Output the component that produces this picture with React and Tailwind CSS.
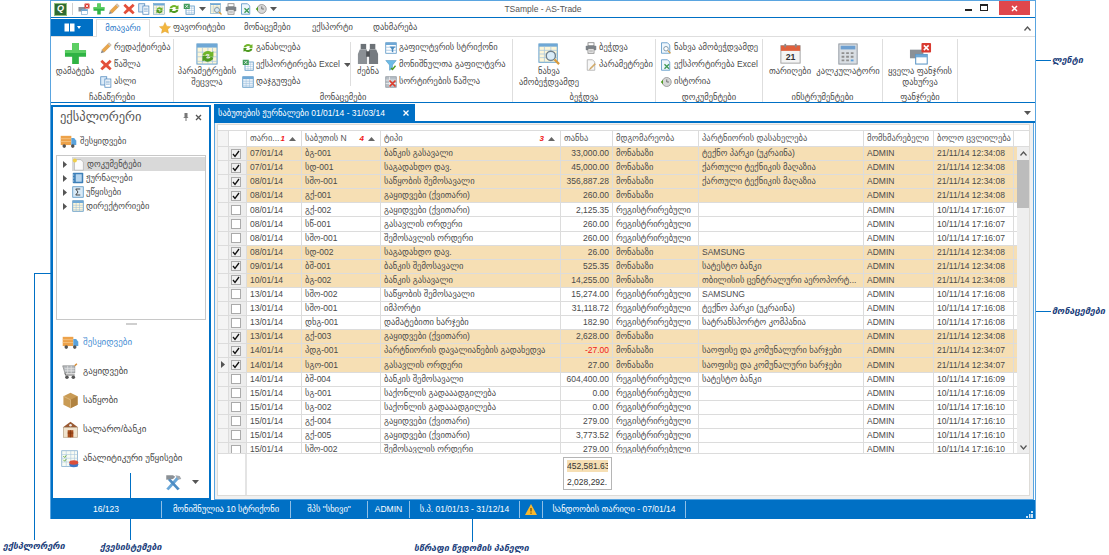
import React from "react";

const Ic = ({ s = 12, v = 16, className = "", children }) => (
  <svg width={s} height={s} viewBox={`0 0 ${v} ${v}`} className={`shrink-0 ${className}`}>
    {children}
  </svg>
);

const PlusIcon = ({ s = 13 }) => (
  <Ic s={s} v={24}>
    <path d="M8.5 1h7v7.5H23v7h-7.500V23h-7v-7.500H1v-7h7.500z" fill="#2fb344" />
    <path d="M8.500 1h7v7.500H23v3H1v-3h7.500z" fill="#5ccf63" />
  </Ic>
);
const PencilIcon = ({ s = 12 }) => (
  <Ic s={s}>
    <path d="M12 1l3 3-9.500 9.500-3-3z" fill="#e9a64a" stroke="#b9782c" strokeWidth=".5" />
    <path d="M2.500 10.500l3 3L1 15z" fill="#8a8a8a" />
    <path d="M12 1l3 3-1.500 1.500-3-3z" fill="#c9c9c9" />
  </Ic>
);
const XIcon = ({ s = 12 }) => (
  <Ic s={s}>
    <path d="M3 1l5 4.500L13 1l2.500 2.500L11 8l4.500 4.500L13 15l-5-4.500L3 15 .5 12.500 5 8 .5 3.500z" fill="#e34f3a" />
  </Ic>
);
const CopyIcon = ({ s = 12 }) => (
  <Ic s={s}>
    <rect x="1" y="1" width="8" height="11" fill="#dcebf8" stroke="#4c86bd" />
    <rect x="6.500" y="4" width="8" height="11" fill="#fff" stroke="#4c86bd" />
    <path d="M8 7h5M8 9h5M8 11h5" stroke="#7fa9d1" />
  </Ic>
);
const RefreshIcon = ({ s = 12 }) => (
  <Ic s={s}>
    <path d="M2 7a6 5 0 0 1 10-3l2-1v5H9l2-1.500A3.500 3 0 0 0 5 7z" fill="#72b52b" />
    <path d="M14 9a6 5 0 0 1-10 3l-2 1V8h5L5 9.500A3.500 3 0 0 0 11 9z" fill="#4e9a20" />
  </Ic>
);
const TableIcon = ({ s = 12, fill = "#fdf6d8" }) => (
  <Ic s={s}>
    <rect x="1" y="1" width="14" height="14" fill={fill} stroke="#4c8cc0" />
    <rect x="1" y="1" width="14" height="3" fill="#6fa8d6" />
    <path d="M1 7h14M1 10h14M1 13h14M5.500 4v11M10 4v11" stroke="#9bbedd" strokeWidth=".7" />
  </Ic>
);
const GridRefreshIcon = ({ s = 24 }) => (
  <Ic s={s} v={24}>
    <rect x="1" y="1" width="22" height="22" fill="#fdf6d8" stroke="#5a98c8" />
    <rect x="1" y="1" width="22" height="4" fill="#6fa8d6" />
    <path d="M1 10h22M1 15h22M1 20h22M7 5v18M13 5v18M18 5v18" stroke="#a5c5e0" strokeWidth=".8" />
    <path d="M7 13a6 5 0 0 1 10-3l2-1v6h-6l2-2a3 3 0 0 0-5 1z" fill="#6fb52a" />
    <path d="M19 16a6 5 0 0 1-10 3l-2 1v-6h6l-2 2a3 3 0 0 0 5-1z" fill="#4e9a20" />
  </Ic>
);
const ExportIcon = ({ s = 12 }) => (
  <Ic s={s}>
    <rect x="4" y="4" width="11" height="11" fill="#fff" stroke="#4c8cc0" />
    <path d="M4 7h11M4 10h11M4 13h11M8 4v11M11.500 4v11" stroke="#9bbedd" strokeWidth=".7" />
    <rect x="1" y="1" width="8" height="7" fill="#3f9a58" />
    <path d="M3 2.500l4 4M7 2.500l-4 4" stroke="#fff" />
  </Ic>
);
const SearchTableIcon = ({ s = 24 }) => (
  <Ic s={s} v={24}>
    <rect x="1" y="1" width="20" height="20" fill="#fdf6d8" stroke="#5a98c8" />
    <rect x="1" y="1" width="20" height="3" fill="#6fa8d6" />
    <path d="M1 8h20M1 12h20M1 16h20M7 4v17M14 4v17" stroke="#a5c5e0" strokeWidth=".8" />
    <circle cx="14" cy="14" r="5" fill="#d9ecf8" stroke="#6e7f8c" strokeWidth="1.500" />
    <path d="M18 18l5 5" stroke="#d89a3c" strokeWidth="2.500" />
  </Ic>
);
const PrinterIcon = ({ s = 12 }) => (
  <Ic s={s}>
    <rect x="4" y="1" width="8" height="4" fill="#fff" stroke="#777" />
    <rect x="1" y="5" width="14" height="6" rx="1" fill="#7c8288" />
    <rect x="4" y="9" width="8" height="6" fill="#fff" stroke="#777" />
    <path d="M5.500 11h5M5.500 13h5" stroke="#999" />
  </Ic>
);
const DocGearIcon = ({ s = 12 }) => (
  <Ic s={s}>
    <path d="M3 1h7l3 3v11H3z" fill="#f7f7f7" stroke="#a8a8a8" />
    <path d="M14 7l-6 6-2 1 1-2 6-6z" fill="#e1b264" stroke="#a97f3a" strokeWidth=".5" />
  </Ic>
);
const DocSearchIcon = ({ s = 12 }) => (
  <Ic s={s}>
    <path d="M2 1h8l3 3v11H2z" fill="#eef6fc" stroke="#4c8cc0" />
    <circle cx="8" cy="9" r="3" fill="#fff" stroke="#5f7c93" />
    <path d="M10.500 11.500L14 15" stroke="#d89a3c" strokeWidth="1.500" />
  </Ic>
);
const DocExcelIcon = ({ s = 12 }) => (
  <Ic s={s}>
    <path d="M2 1h8l3 3v11H2z" fill="#eef6fc" stroke="#4c8cc0" />
    <path d="M6 7l6 6M12 7l-6 6" stroke="#3f9a58" strokeWidth="1.800" />
  </Ic>
);
const HistoryIcon = ({ s = 12 }) => (
  <Ic s={s}>
    <circle cx="9" cy="8" r="6" fill="#d7d7d7" stroke="#8b8b8b" />
    <path d="M9 4.500V8h3" stroke="#555" fill="none" />
    <path d="M1 8l3-3v6z" fill="#4e9a20" />
  </Ic>
);
const FilterRowIcon = ({ s = 12 }) => (
  <Ic s={s}>
    <rect x="1" y="1" width="14" height="14" fill="#fff" stroke="#4c8cc0" />
    <rect x="1" y="1" width="14" height="3" fill="#6fa8d6" />
    <path d="M1 7h14M1 11h14" stroke="#9bbedd" />
    <path d="M6 6h8l-3 3.500V14l-2-1V9.500z" fill="#4c8cc0" />
  </Ic>
);
const FunnelIcon = ({ s = 12 }) => (
  <Ic s={s}>
    <path d="M1 2h14L10 8v5l-4 2V8z" fill="#6cbbe6" stroke="#3a87b8" strokeWidth=".6" />
    <path d="M8 12l2 2 4-5" stroke="#4e9a20" strokeWidth="1.800" fill="none" />
  </Ic>
);
const SortXIcon = ({ s = 12 }) => (
  <Ic s={s}>
    <rect x="1" y="1" width="14" height="14" fill="#b9c0c7" stroke="#8a9299" />
    <path d="M1 5.500h14M1 10h14M6 1v14" stroke="#f2f2f2" />
    <path d="M6 6l8 8M14 6l-8 8" stroke="#df3b2a" strokeWidth="2.200" />
  </Ic>
);
const BinocularsIcon = ({ s = 22 }) => (
  <Ic s={s} v={24}>
    <rect x="4" y="1" width="6" height="6" fill="#6c7277" />
    <rect x="14" y="1" width="6" height="6" fill="#6c7277" />
    <path d="M3 7h8v16H1V12z" fill="#8b9095" />
    <path d="M13 7h8l2 5v11H13z" fill="#757a80" />
    <rect x="10" y="9" width="4" height="6" fill="#4f5357" />
  </Ic>
);
const CalendarIcon = ({ s = 21 }) => (
  <Ic s={s} v={24}>
    <rect x="1" y="3" width="22" height="20" fill="#f4f4f4" stroke="#9a9a9a" />
    <rect x="1" y="3" width="22" height="6" fill="#e0603c" />
    <rect x="5" y="1" width="2" height="4" fill="#888" />
    <rect x="17" y="1" width="2" height="4" fill="#888" />
    <text x="12" y="19.500" textAnchor="middle" fontSize="10" fontWeight="700" fontFamily="Liberation Sans" fill="#333">21</text>
  </Ic>
);
const CalculatorIcon = ({ s = 22 }) => (
  <Ic s={s} v={24}>
    <rect x="2" y="1" width="20" height="22" fill="#d9dee3" stroke="#8d959c" />
    <rect x="4" y="3" width="16" height="4" fill="#6e9fd0" />
    <path d="M5 10h3v2H5zM10 10h3v2h-3zM15 10h3v2h-3zM5 14h3v2H5zM10 14h3v2h-3zM15 14h3v2h-3zM5 18h3v2H5zM10 18h3v2h-3z" fill="#8f8f8f" />
    <path d="M15 18h3v2h-3z" fill="#5aa0dc" />
  </Ic>
);
const CloseAllIcon = ({ s = 23 }) => (
  <Ic s={s} v={24}>
    <rect x="1" y="8" width="14" height="9" fill="#8a9097" />
    <rect x="7" y="13" width="12" height="10" fill="#fff" stroke="#4c8cc0" />
    <rect x="7" y="13" width="12" height="3" fill="#6fa8d6" />
    <rect x="13" y="1" width="10" height="10" rx="1" fill="#d93a30" />
    <path d="M15.500 3.500l5 5M20.500 3.500l-5 5" stroke="#fff" strokeWidth="1.600" />
  </Ic>
);
const TruckIcon = ({ s = 17 }) => (
  <Ic s={s} v={24}>
    <rect x="1" y="4" width="15" height="13" fill="#eda24a" />
    <path d="M1 8h15M1 12h15" stroke="#f6c98d" />
    <path d="M16 7h4l3 4v6h-7z" fill="#5aa3dc" />
    <circle cx="6" cy="18.500" r="2.500" fill="#555" />
    <circle cx="18" cy="18.500" r="2.500" fill="#555" />
  </Ic>
);
const CartIcon = ({ s = 17 }) => (
  <Ic s={s} v={24}>
    <path d="M1 4h17v10H4z" fill="#b8bcc0" stroke="#888" />
    <path d="M4 8h14M4 11h14M8 4v10M13 4v10" stroke="#e6e6e6" />
    <path d="M18 4l3-3" stroke="#d98b2e" strokeWidth="2" />
    <path d="M4 14l1 3h13" stroke="#666" strokeWidth="1.500" fill="none" />
    <circle cx="7" cy="20" r="2.500" fill="#555" />
    <circle cx="16" cy="20" r="2.500" fill="#555" />
  </Ic>
);
const BoxIcon = ({ s = 17 }) => (
  <Ic s={s} v={24}>
    <path d="M12 1l10 5v12l-10 5-10-5V6z" fill="#c99b55" />
    <path d="M12 11l10-5v12l-10 5z" fill="#b18340" />
    <path d="M2 6l10 5v12" stroke="#e2c08c" fill="none" />
  </Ic>
);
const BankIcon = ({ s = 17 }) => (
  <Ic s={s} v={24}>
    <path d="M12 1l11 8H1z" fill="#9a5b34" />
    <rect x="2" y="9" width="20" height="14" fill="#f0e3cd" stroke="#b7a387" />
    <rect x="8" y="13" width="8" height="10" fill="#a94f1e" />
    <path d="M12 13v10M8 17h8" stroke="#7a3510" />
    <circle cx="12" cy="6" r="1.800" fill="#eee" />
  </Ic>
);
const AnalyticsIcon = ({ s = 18 }) => (
  <Ic s={s} v={24}>
    <rect x="1" y="1" width="21" height="21" fill="#f7fbf3" stroke="#7ea9cd" />
    <path d="M1 6h21M1 11h21M1 16h21M7 1v21M13 1v21M18 1v21" stroke="#a9c7df" strokeWidth=".8" />
    <path d="M3 8l2 2 2-3M3 13l2 2 2-3" stroke="#4e9a20" fill="none" />
    <ellipse cx="17" cy="19" rx="6" ry="4" fill="#3f78c7" />
    <ellipse cx="17" cy="16.500" rx="6" ry="3" fill="#db4e3a" />
  </Ic>
);
const ToolsIcon = () => (
  <Ic s={18} v={24}>
    <path d="M3 21L17 5l3 3L6 23z" fill="#6aa7d8" />
    <path d="M21 21L8 7l-3 2 13 14z" fill="#4d8cc3" />
    <path d="M3 3h9l3 2-3 3-9 1z" fill="#8b9095" />
    <path d="M15 3l6 1 2 4-4 1z" fill="#a3a8ad" />
  </Ic>
);
const StarIcon = () => (
  <Ic s={12}>
    <path d="M8 .500l2.300 5 5.200.700-3.800 3.600 1 5.200L8 12.500 3.300 15l1-5.200L.500 6.200l5.200-.700z" fill="#f3b63e" stroke="#d99a22" strokeWidth=".5" />
  </Ic>
);
const NewDocIcon = () => (
  <Ic s={13}>
    <path d="M3 2h8l3 3v10H3z" fill="#fbfbfb" stroke="#b6b6b6" />
    <circle cx="3.500" cy="3" r="2.500" fill="#f0cf4a" />
  </Ic>
);
const JournalIcon = () => (
  <Ic s={12}>
    <rect x="1" y="1" width="14" height="14" rx="1" fill="#3d7fb8" />
    <rect x="5" y="3" width="8" height="10" fill="#b6d5ee" />
    <path d="M1 4h2M1 8h2M1 12h2" stroke="#dcebf8" />
  </Ic>
);
const SigmaIcon = () => (
  <Ic s={12}>
    <rect x="1" y="1" width="14" height="14" fill="#d8e9f6" stroke="#4c8cc0" />
    <path d="M5 4h6M5 4l3 4-3 4h6" stroke="#333" strokeWidth="1.200" fill="none" />
  </Ic>
);

const Caret = ({ className = "" }) => (
  <svg width="7" height="4" viewBox="0 0 7 4" className={`shrink-0 ${className}`}>
    <path d="M0 0h7L3.500 4z" fill="#555" />
  </svg>
);
const TreeArrow = ({ className = "" }) => (
  <svg width="4" height="7" viewBox="0 0 4 7" className={`shrink-0 ${className}`}>
    <path d="M0 0l4 3.500L0 7z" fill="#555" />
  </svg>
);

const BigButton = ({ icon, lines, className }) => (
  <div className={`flex flex-col items-center shrink-0 ${className}`}>
    <div className="h-[23px] flex items-center">{icon}</div>
    <div className="mt-[1px] text-center leading-[11px] whitespace-nowrap">
      {lines.map((l) => (
        <div key={l}>{l}</div>
      ))}
    </div>
  </div>
);

const SmallColumn = ({ items, className }) => (
  <div className={`flex flex-col shrink-0 -mt-[3px] ${className}`}>
    {items.map((it) => (
      <div key={it.label} className="h-[17px] flex items-center gap-[2px] whitespace-nowrap">
        {it.icon}
        <span>{it.label}</span>
        {it.caret && <Caret className="ml-[2px]" />}
      </div>
    ))}
  </div>
);

const RibbonGroup = ({ width, label, children }) => (
  <div className={`${width} shrink-0 flex flex-col pt-[3px] border-r border-[#dedede] h-[63px] mt-[2px]`}>
    <div className="h-[48px] flex">{children}</div>
    <div className="flex-1 flex items-end justify-center leading-[10px] whitespace-nowrap">{label}</div>
  </div>
);

const cols = {
  ind: "w-[11px]",
  chk: "w-[18px]",
  date: "w-[55px]",
  num: "w-[79px]",
  type: "w-[180px]",
  sum: "w-[52px]",
  status: "w-[86px]",
  partner: "w-[165px]",
  user: "w-[70px]",
  time: "w-[80px]",
};

const S1 = "მონახაზი";
const S2 = "რეგისტრირებული";
const P = "საოფისე და კომუნალური ხარჯები";

const rows = [
  [1, "07/01/14", "ბგ-001", "ბანკის გასავალი", "33,000.00", "ტექნო პარკი (უკრაინა)", "21/11/14 12:34:08"],
  [1, "07/01/14", "სდ-001", "საგადახდო დავ.", "45,000.00", "ქართული ტექნიკის მაღაზია", "21/11/14 12:34:08"],
  [1, "08/01/14", "სშო-001", "საწყობის შემოსავალი", "356,887.28", "ქართული ტექნიკის მაღაზია", "21/11/14 12:34:08"],
  [1, "08/01/14", "გქ-001", "გაყიდვები (ქვითარი)", "260.00", "", "21/11/14 12:34:08"],
  [0, "08/01/14", "გქ-002", "გაყიდვები (ქვითარი)", "2,125.35", "", "10/11/14 17:16:07"],
  [0, "08/01/14", "სწ-001", "გასავლის ორდერი", "260.00", "", "10/11/14 17:16:07"],
  [0, "08/01/14", "სშო-001", "შემოსავლის ორდერი", "260.00", "", "10/11/14 17:16:07"],
  [1, "08/01/14", "სდ-002", "საგადახდო დავ.", "26.00", "SAMSUNG", "21/11/14 12:34:08"],
  [1, "09/01/14", "ბშ-001", "ბანკის შემოსავალი", "525.35", "სატესტო ბანკი", "21/11/14 12:34:08"],
  [1, "10/01/14", "ბგ-002", "ბანკის გასავალი", "14,255.00", "თბილისის ცენტრალური აეროპორტ...", "21/11/14 12:34:08"],
  [0, "13/01/14", "სშო-002", "საწყობის შემოსავალი", "15,274.00", "SAMSUNG", "10/11/14 17:16:08"],
  [0, "13/01/14", "სშო-001", "იმპორტი", "31,118.72", "ტექნო პარკი (უკრაინა)", "10/11/14 17:16:08"],
  [0, "13/01/14", "დხგ-001", "დამატებითი ხარჯები", "182.90", "სატრანსპორტო კომპანია", "10/11/14 17:16:08"],
  [1, "13/01/14", "გქ-003", "გაყიდვები (ქვითარი)", "2,628.00", "", "21/11/14 12:34:08"],
  [1, "14/01/14", "პდგ-001", "პარტნიორის დავალიანების გადახედვა", "-27.00", P, "21/11/14 12:34:07"],
  [1, "14/01/14", "სგო-001", "გასავლის ორდერი", "27.00", P, "21/11/14 12:34:07", true],
  [0, "14/01/14", "ბშ-004", "ბანკის შემოსავალი", "604,400.00", "სატესტო ბანკი", "10/11/14 17:16:09"],
  [0, "15/01/14", "სგ-001", "საქონლის გადააადგილება", "0.00", "", "10/11/14 17:16:09"],
  [0, "15/01/14", "სგ-002", "საქონლის გადააადგილება", "0.00", "", "10/11/14 17:16:10"],
  [0, "15/01/14", "გქ-004", "გაყიდვები (ქვითარი)", "279.00", "", "10/11/14 17:16:10"],
  [0, "15/01/14", "გქ-005", "გაყიდვები (ქვითარი)", "3,773.52", "", "10/11/14 17:16:10"],
  [0, "15/01/14", "სშო-002", "შემოსავლის ორდერი", "279.00", "", "10/11/14 17:16:10"],
];

const HeaderCell = ({ width, label, order }) => (
  <div className={`${width} shrink-0 h-full flex items-center px-[3px] border-r border-[#dcdcdc]`}>
    <span className="whitespace-nowrap">{label}</span>
    {order && (
      <span className="ml-auto flex items-center gap-[4px] pr-[2px]">
        <span className="text-[#f01818] italic font-bold text-[8px]">{order}</span>
        <svg width="7" height="4" viewBox="0 0 7 4">
          <path d="M3.500 0L7 4H0z" fill="#666" />
        </svg>
      </span>
    )}
  </div>
);

const Cell = ({ width, right, red, children }) => (
  <div
    className={`${width} shrink-0 h-full flex items-center px-[3px] border-r border-[#dcdcdc] whitespace-nowrap overflow-hidden ${
      right ? "justify-end" : ""
    } ${red ? "text-[#f01818]" : ""}`}
  >
    {children}
  </div>
);

const Row = ({ row }) => {
  const [on, date, num, type, sum, partner, time, current] = row;
  return (
    <div className="h-[14.1px] flex border-b border-[#dcdcdc]">
      <div className={`${cols.ind} shrink-0 bg-[#f4f4f4] flex items-center justify-center border-r border-[#dcdcdc]`}>
        {current && <TreeArrow />}
      </div>
      <div className={`${cols.chk} shrink-0 bg-[#ededed] flex items-center pl-[2px] border-r border-[#dcdcdc]`}>
        <div className={`w-[10px] h-[10px] border border-[#aaa] flex items-center justify-center ${on ? "bg-[#f0f0f0]" : "bg-white"}`}>
          {on ? (
            <svg width="8" height="8" viewBox="0 0 8 8">
              <path d="M1 4l2 2.500L7 1" stroke="#111" strokeWidth="1.300" fill="none" />
            </svg>
          ) : null}
        </div>
      </div>
      <div className={`flex flex-1 ${on ? "bg-[#f6dfb4]" : "bg-white"}`}>
        <Cell width={cols.date}>{date}</Cell>
        <Cell width={cols.num}>{num}</Cell>
        <Cell width={cols.type}>{type}</Cell>
        <Cell width={cols.sum} right red={sum.startsWith("-")}>
          {sum}
        </Cell>
        <Cell width={cols.status}>{on ? S1 : S2}</Cell>
        <Cell width={cols.partner}>{partner}</Cell>
        <Cell width={cols.user}>ADMIN</Cell>
        <Cell width={cols.time}>{time}</Cell>
      </div>
    </div>
  );
};

const NavItem = ({ icon, label, active }) => (
  <div className="h-[29px] flex items-center gap-[4px] pl-[8px] text-[9px]">
    <div className="w-[18px] flex justify-center">{icon}</div>
    <span className={active ? "text-[#4a90d4]" : ""}>{label}</span>
  </div>
);

const TreeItem = ({ icon, label, active }) => (
  <div className="h-[14.100px] flex items-center">
    <div className="w-[15px] flex justify-center">
      <TreeArrow />
    </div>
    <div className={`flex-1 h-full flex items-center gap-[2px] ${active ? "bg-[#d9d9d9]" : ""}`}>
      {icon}
      <span>{label}</span>
    </div>
  </div>
);

const StatusSeg = ({ width, children }) => (
  <div className={`${width} shrink-0 h-[17px] flex items-center justify-center border-r border-[#8fbfe6] whitespace-nowrap`}>
    {children}
  </div>
);

export default function App() {
  return (
    <div
      className="relative w-[1109px] h-[555px] bg-white overflow-hidden text-[#4a4a4a] text-[8.5px]"
      style={{ fontFamily: '"Liberation Sans", "DejaVu Sans", sans-serif' }}
    >
      {/* application window */}
      <div className="ml-[50px] w-[986px] h-[519px] flex flex-col border-x border-t border-[#5aa5e0]">
        <div className="relative h-[16px] shrink-0 flex items-center pl-[3px]">
          <div className="w-[13px] h-[13px] bg-[#2f6b34] flex items-center justify-center text-white font-bold italic text-[9px] border border-[#8fbf7d]">
            Q
          </div>
          <div className="w-px h-[12px] bg-[#cfcfcf] ml-[5px] mr-[5px]" />
          <div className="flex items-center gap-[3px] [&>*]:shrink-0">
            <CloseAllIcon s={12} />
            <PlusIcon s={12} />
            <PencilIcon s={12} />
            <XIcon s={12} />
            <CopyIcon s={12} />
            <GridRefreshIcon s={12} />
            <RefreshIcon s={12} />
            <ExportIcon s={12} />
            <Caret className="mx-[1px]" />
            <SearchTableIcon s={12} />
            <PrinterIcon s={12} />
            <DocExcelIcon s={12} />
            <HistoryIcon s={12} />
            <Caret />
          </div>
          <div className="absolute left-0 right-0 top-0 h-full flex items-center justify-center text-[8.5px] text-[#555] pointer-events-none">
            TSample - AS-Trade
          </div>
          <div className="ml-auto flex items-start h-full">
            <div className="w-[21px] flex justify-center pt-[8px]">
              <div className="w-[7px] h-[2px] bg-[#222]" />
            </div>
            <div className="w-[10px] flex justify-center pt-[3px]">
              <div className="w-[8px] h-[7px] border border-[#222] border-t-2" />
            </div>
            <div className="ml-[10px] mr-[5px] w-[31px] h-[14px] bg-[#e0474c] flex items-center justify-center">
              <svg width="7" height="7" viewBox="0 0 7 7">
                <path d="M1 1l5 5M6 1L1 6" stroke="#fff" strokeWidth="1.500" />
              </svg>
            </div>
          </div>
        </div>

        {/* ribbon */}
        <div className="h-[86px] shrink-0 flex flex-col border-y border-[#0070c5]">
          <div className="h-[19px] flex items-end border-b border-[#dedede] relative">
            <div className="w-[42px] h-[17px] bg-[#0070c5] flex items-center justify-center gap-[2px]">
              <svg width="11" height="9" viewBox="0 0 11 9">
                <rect x=".5" y=".5" width="10" height="8" fill="#fff" />
                <path d="M5.500 0v9" stroke="#0070c5" />
              </svg>
              <svg width="4" height="3" viewBox="0 0 4 3">
                <path d="M0 0h4L2 3z" fill="#fff" />
              </svg>
            </div>
            <div className="ml-[3px] w-[54px] h-[18px] flex items-center justify-center border-x border-t border-[#dedede] bg-white -mb-px text-[#2a78c8]">
              მთავარი
            </div>
            <div className="ml-[9px] w-[85px] flex items-center h-[17px] gap-[2px] whitespace-nowrap">
              <StarIcon />
              <span>ფავორიტები</span>
            </div>
            <div className="w-[68px] h-[17px] flex items-center">მონაცემები</div>
            <div className="w-[61px] h-[17px] flex items-center">ექსპორტი</div>
            <div className="h-[17px] flex items-center">დახმარება</div>
            <svg width="7" height="5" viewBox="0 0 7 5" className="ml-auto mr-[4px] mb-[5px]">
              <path d="M.5 4.500L3.500 1l3 3.500" stroke="#555" strokeWidth="1.300" fill="none" />
            </svg>
          </div>
          <div className="flex-1 flex items-start">
            <RibbonGroup width="w-[123px]" label="ჩანაწერები">
              <BigButton className="w-[42px] ml-[3px]" icon={<PlusIcon s={23} />} lines={["დამატება"]} />
              <SmallColumn
                className="ml-[4px]"
                items={[
                  { label: "რედაქტირება", icon: <PencilIcon /> },
                  { label: "წაშლა", icon: <XIcon /> },
                  { label: "ასლი", icon: <CopyIcon /> },
                ]}
              />
            </RibbonGroup>
            <RibbonGroup width="w-[339px]" label="მონაცემები">
              <BigButton className="w-[62px] ml-[2px]" icon={<GridRefreshIcon s={22} />} lines={["პარამეტრების", "შეცვლა"]} />
              <SmallColumn
                className="ml-[4px] w-[108px]"
                items={[
                  { label: "განახლება", icon: <RefreshIcon /> },
                  { label: "ექსპორტირება Excel", icon: <ExportIcon />, caret: true },
                  { label: "დაჯგუფება", icon: <TableIcon fill="#e7f0f8" /> },
                ]}
              />
              <div className="w-px h-[44px] bg-[#dedede]" />
              <BigButton className="w-[30px] ml-[2px]" icon={<BinocularsIcon />} lines={["ძებნა"]} />
              <SmallColumn
                className="ml-[2px]"
                items={[
                  { label: "გაფილტვრის სტრიქონი", icon: <FilterRowIcon /> },
                  { label: "მონიშნულთა გაფილტვრა", icon: <FunnelIcon /> },
                  { label: "სორტირების წაშლა", icon: <SortXIcon /> },
                ]}
              />
            </RibbonGroup>
            <RibbonGroup width="w-[143px]" label="ბეჭდვა">
              <BigButton className="w-[64px] ml-[4px]" icon={<SearchTableIcon s={22} />} lines={["ნახვა", "ამობეჭდვამდე"]} />
              <SmallColumn
                className="ml-[4px]"
                items={[
                  { label: "ბეჭდვა", icon: <PrinterIcon /> },
                  { label: "პარამეტრები", icon: <DocGearIcon /> },
                ]}
              />
            </RibbonGroup>
            <RibbonGroup width="w-[107px]" label="დოკუმენტები">
              <SmallColumn
                className="ml-[4px]"
                items={[
                  { label: "ნახვა ამობეჭდვამდე", icon: <DocSearchIcon /> },
                  { label: "ექსპორტირება Excel", icon: <DocExcelIcon /> },
                  { label: "ისტორია", icon: <HistoryIcon /> },
                ]}
              />
            </RibbonGroup>
            <RibbonGroup width="w-[120px]" label="ინსტრუმენტები">
              <BigButton className="w-[46px] ml-[4px]" icon={<CalendarIcon />} lines={["თარიღები"]} />
              <BigButton className="w-[66px] ml-[2px]" icon={<CalculatorIcon />} lines={["კალკულატორი"]} />
            </RibbonGroup>
            <RibbonGroup width="w-[75px]" label="ფანჯრები">
              <BigButton className="w-[70px] ml-[2px]" icon={<CloseAllIcon />} lines={["ყველა ფანჯრის", "დახურვა"]} />
            </RibbonGroup>
          </div>
        </div>

        {/* body */}
        <div className="flex-1 flex min-h-0">
          <div className="w-[160px] shrink-0 mt-[2px] border-2 border-[#0070c5] flex flex-col">
            <div className="h-[20px] flex items-center pl-[7px] pr-[7px]">
              <span className="text-[12.5px] text-[#555]">ექსპლორერი</span>
              <svg width="6" height="8" viewBox="0 0 6 8" className="ml-auto">
                <path d="M1.500 0h3v4l1 1H0l1.500-1zM2.500 5h1v3h-1z" fill="#777" />
              </svg>
              <svg width="7" height="7" viewBox="0 0 7 7" className="ml-[6px]">
                <path d="M1 1l5 5M6 1L1 6" stroke="#555" strokeWidth="1.300" />
              </svg>
            </div>
            <div className="h-[28px] flex items-center gap-[3px] pl-[7px]">
              <TruckIcon />
              <span>შესყიდვები</span>
            </div>
            <div className="mx-[3px] h-[165px] shrink-0 border border-[#c8c8c8] pt-[1px]">
              <TreeItem icon={<NewDocIcon />} label="დოკუმენტები" active />
              <TreeItem icon={<JournalIcon />} label="ჟურნალები" />
              <TreeItem icon={<SigmaIcon />} label="უწყისები" />
              <TreeItem icon={<TableIcon />} label="დირექტორიები" />
            </div>
            <div className="h-[8px] flex justify-center items-center">
              <div className="w-[11px] h-[2px] bg-[#cfcfcf]" />
            </div>
            <div>
              <NavItem icon={<TruckIcon />} label="შესყიდვები" active />
              <NavItem icon={<CartIcon />} label="გაყიდვები" />
              <NavItem icon={<BoxIcon />} label="საწყობი" />
              <NavItem icon={<BankIcon />} label="სალარო/ბანკი" />
              <NavItem icon={<AnalyticsIcon />} label="ანალიტიკური უწყისები" />
            </div>
            <div className="flex items-center justify-end gap-[10px] pr-[10px]">
              <ToolsIcon />
              <Caret />
            </div>
          </div>

          {/* documents area */}
          <div className="flex-1 min-w-0 ml-[3px] mt-[1px] flex flex-col">
            <div className="h-[19px] shrink-0 flex items-start relative border-b-2 border-[#0070c5]">
              <div className="w-[201px] h-[18px] bg-[#0070c5] text-white flex items-center pl-[4px] pr-[6px]">
                <span className="whitespace-nowrap">საბუთების ჟურნალები 01/01/14 - 31/03/14</span>
                <svg width="6" height="6" viewBox="0 0 6 6" className="ml-auto shrink-0">
                  <path d="M.5.500l5 5M5.500.500l-5 5" stroke="#fff" strokeWidth="1.300" />
                </svg>
              </div>
              <Caret className="ml-auto mr-[4px] mt-[7px]" />
            </div>
            <div className="flex-1 min-h-0 border-x border-b border-[#5aa5e0] mr-[1px] p-[1px] pl-[2px] pr-[3px] pb-[3px] bg-[#f0f0f0]">
              <div className="h-full bg-white border border-[#dedcd8] flex flex-col pt-[5px]">
                {/* grid header */}
                <div className="h-[17px] shrink-0 flex border-y border-[#dcdcdc] text-[#555]">
                  <div className={`${cols.ind} shrink-0 bg-[#f4f4f4] border-r border-[#dcdcdc]`} />
                  <div className={`${cols.chk} shrink-0 border-r border-[#dcdcdc]`} />
                  <HeaderCell width={cols.date} label="თარი..." order="1" />
                  <HeaderCell width={cols.num} label="საბუთის N" order="4" />
                  <HeaderCell width={cols.type} label="ტიპი" order="3" />
                  <HeaderCell width={cols.sum} label="თანხა" />
                  <HeaderCell width={cols.status} label="მდგომარეობა" />
                  <HeaderCell width={cols.partner} label="პარტნიორის დასახელება" />
                  <HeaderCell width={cols.user} label="მომხმარებელი" />
                  <HeaderCell width={cols.time} label="ბოლო ცვლილება" />
                </div>
                {/* grid rows */}
                <div className="relative h-[307px] shrink-0 overflow-hidden border-b border-[#dcdcdc]">
                  {rows.map((r, i) => (
                    <Row key={i} row={r} />
                  ))}
                  <div className="absolute right-0 top-0 bottom-0 w-[12px] bg-[#eeeeee] flex flex-col items-center">
                    <svg width="7" height="5" viewBox="0 0 7 5" className="mt-[4px]">
                      <path d="M.5 4.500L3.500 1l3 3.500" stroke="#555" strokeWidth="1.200" fill="none" />
                    </svg>
                    <div className="w-full h-[48px] bg-[#bcbcbc] mt-[4px]" />
                    <svg width="7" height="5" viewBox="0 0 7 5" className="mt-auto mb-[3px]">
                      <path d="M.5.500L3.500 4l3-3.500" stroke="#555" strokeWidth="1.200" fill="none" />
                    </svg>
                  </div>
                </div>
                {/* totals */}
                <div className="flex-1 flex min-h-0">
                  <div className={`${cols.ind} shrink-0`} />
                  <div className={`${cols.chk} shrink-0 border-r-2 border-[#e4e4e4]`} />
                  <div className="ml-[316px] mt-[3px] w-[49px] h-[33px] border border-[#b5b5b5] px-[3px] flex flex-col justify-center gap-[4px] overflow-hidden shrink-0 text-[#333]">
                    <div className="bg-[#f6dfb4] whitespace-nowrap overflow-hidden h-[12px] leading-[12px]">452,581.63</div>
                    <div className="whitespace-nowrap overflow-hidden h-[12px] leading-[12px]">2,028,292.</div>
                  </div>
                </div>
              </div>
            </div>
          </div>
        </div>

        {/* status bar */}
        <div className="h-[19px] shrink-0 bg-[#0070c5] text-white flex items-center relative">
          <StatusSeg width="w-[111px]">16/123</StatusSeg>
          <StatusSeg width="w-[129px]">მონიშნულია 10 სტრიქონი</StatusSeg>
          <StatusSeg width="w-[77px]">შპს "სხივი"</StatusSeg>
          <StatusSeg width="w-[42px]">ADMIN</StatusSeg>
          <StatusSeg width="w-[110px]">ს.პ. 01/01/13 - 31/12/14</StatusSeg>
          <StatusSeg width="w-[23px]">
            <svg width="12" height="11" viewBox="0 0 12 11">
              <path d="M6 0l6 11H0z" fill="#f7b82e" />
              <path d="M6 4v3.500M6 8.500v1.200" stroke="#5a3d00" strokeWidth="1.100" />
            </svg>
          </StatusSeg>
          <StatusSeg width="w-[143px]">სანდოობის თარიღი - 07/01/14</StatusSeg>
          <svg width="7" height="7" viewBox="0 0 7 7" className="ml-auto mr-[2px] self-end mb-[1px]">
            <path d="M5 0h2v2H5zM3 3h1.500v4H3zM5 3h2v4H5zM0 5h2v2H0z" fill="#cfe4f6" />
          </svg>
        </div>
      </div>

      {/* callouts */}
      <div className="absolute left-[1036px] top-[60px] w-[15px] h-px bg-[#0070c5]" />
      <div className="absolute left-[1052px] top-[54px] text-[9px] italic font-semibold text-[#1d3f7c]">ლენტი</div>
      <div className="absolute left-[1036px] top-[311px] w-[15px] h-px bg-[#0070c5]" />
      <div className="absolute left-[1052px] top-[305px] text-[9px] italic font-semibold text-[#1d3f7c]">მონაცემები</div>
      <div className="absolute left-[34px] top-[273px] w-[17px] h-px bg-[#0070c5]" />
      <div className="absolute left-[34px] top-[273px] w-px h-[267px] bg-[#0070c5]" />
      <div className="absolute left-[3px] top-[540px] text-[9px] italic font-semibold text-[#1d3f7c]">ექსპლორერი</div>
      <div className="absolute left-[130px] top-[473px] w-px h-[67px] bg-[#0070c5]" />
      <div className="absolute left-[100px] top-[541px] text-[9px] italic font-semibold text-[#1d3f7c]">ქვესისტემები</div>
      <div className="absolute left-[472px] top-[519px] w-px h-[23px] bg-[#0070c5]" />
      <div className="absolute left-[414px] top-[542px] text-[9px] italic font-semibold text-[#1d3f7c]">სწრაფი წვდომის პანელი</div>
    </div>
  );
}
